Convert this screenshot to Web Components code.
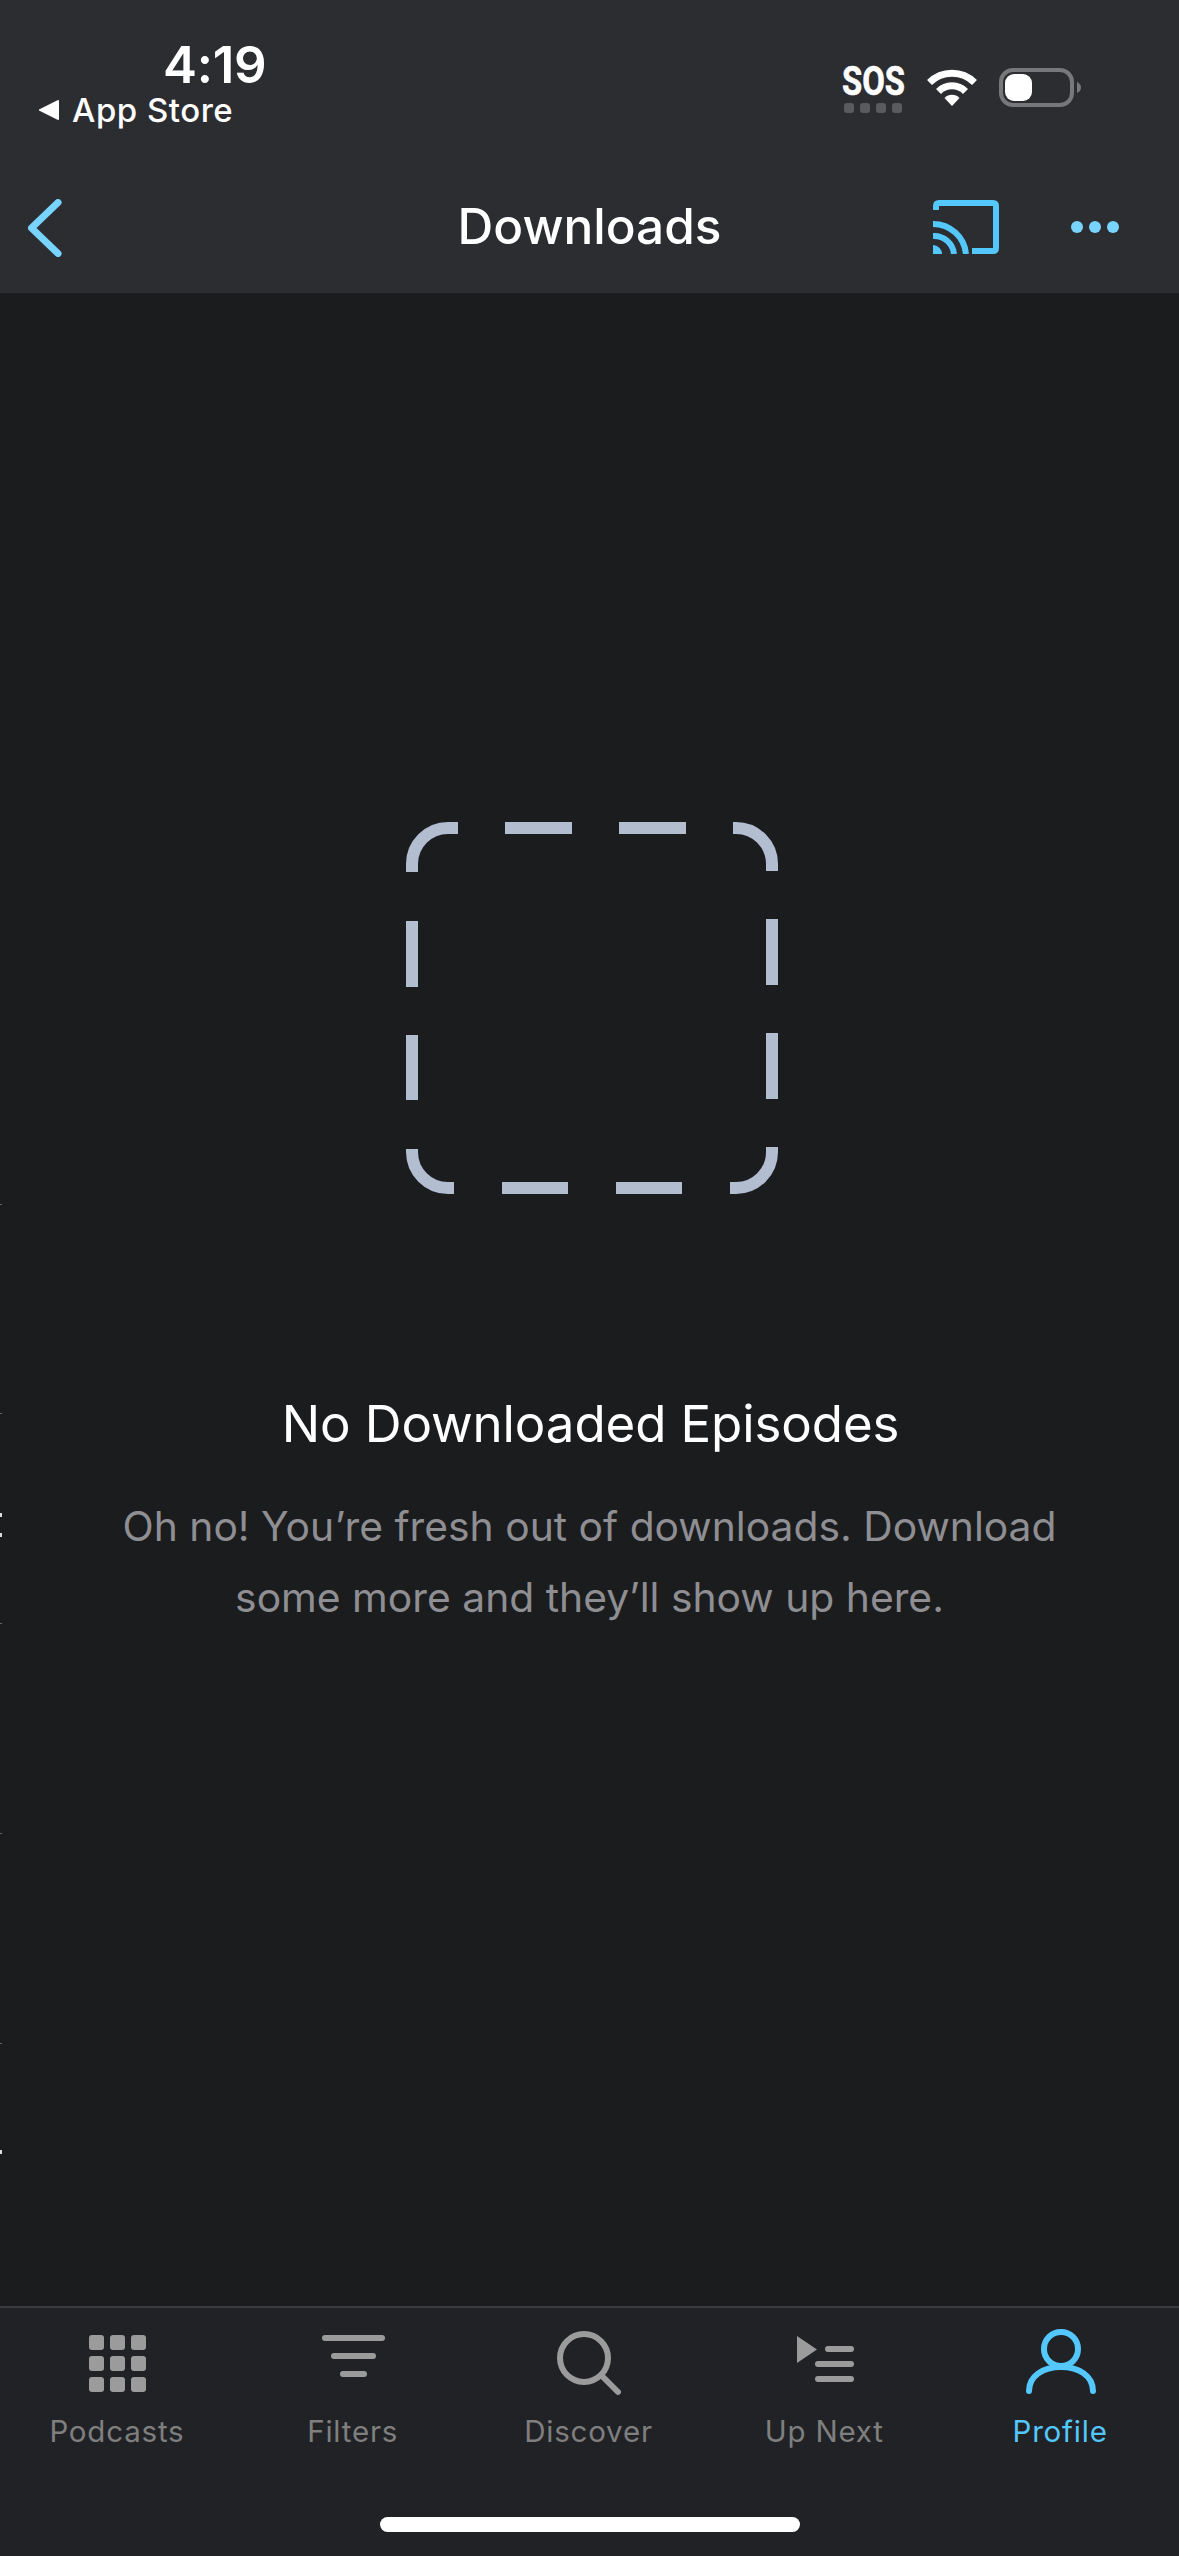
<!DOCTYPE html>
<html>
<head>
<meta charset="utf-8">
<title>Downloads</title>
<style>
  html, body { margin: 0; padding: 0; background: #1b1c1e; }
  body { width: 1179px; height: 2556px; font-family: Inter, "Liberation Sans", sans-serif; color: #fff; overflow: hidden; position: relative; }
  app-shell { height: 2556px; }
</style>
</head>
<body>
<app-shell>
  <top-bar slot="top" title-text="Downloads"></top-bar>
  <empty-state slot="main" heading="No Downloaded Episodes">Oh no! You’re fresh out of downloads. Download<br>some more and they’ll show up here.</empty-state>
  <tab-bar slot="bottom"></tab-bar>
</app-shell>
<edge-marks></edge-marks>

<script>
class AppShell extends HTMLElement {
  constructor() {
    super();
    this.attachShadow({ mode: 'open' });
    this.shadowRoot.innerHTML = `
      <style>
        :host { display: flex; flex-direction: column; }
        .main { flex: 1; display: flex; flex-direction: column; min-height: 0; }
      </style>
      <slot name="top"></slot>
      <div class="main"><slot name="main"></slot></div>
      <slot name="bottom"></slot>
    `;
  }
}

class TopBar extends HTMLElement {
  constructor() {
    super();
    this.attachShadow({ mode: 'open' });
  }
  connectedCallback() {
    this.shadowRoot.innerHTML = `
      <style>
        :host { display: block; height: 293px; background: #2c2d31; color: #fff; }
        .status { height: 193px; display: flex; justify-content: space-between; padding: 0 98px 0 39px; box-sizing: border-box; }
        .left { padding-top: 38px; }
        .time { font-size: 51px; line-height: 54px; font-weight: 600; margin-left: 124px; letter-spacing: -0.3px; }
        .back { display: flex; align-items: center; gap: 13px; font-size: 33px; line-height: 40px; font-weight: 500; margin-top: -2px; letter-spacing: 0.5px; }
        .back svg { display: block; }
        .right { display: flex; align-items: flex-start; padding-top: 67px; }
        .sos { width: 61px; margin-left: 0; margin-right: 22px; transform: translateX(-2px); }
        .sos b { display: block; font: 700 41px/29px Roboto, sans-serif; width: 61px; transform: scaleX(.8); transform-origin: left top; white-space: nowrap; -webkit-text-stroke: .6px #fff; }
        .dots { display: flex; gap: 6px; margin: 7px 0 0 2px; }
        .dots i { width: 10px; height: 10px; border-radius: 3px; background: #5a5b5f; }
        .wifi { display: block; margin: 2px 22px 0 0; }
        .batt { display: block; margin-top: 1px; }
        .nav { height: 100px; display: grid; grid-template-columns: minmax(0, 1fr) auto minmax(0, 1fr); align-items: start; padding: 0 60px 0 28px; }
        .nav svg { display: block; }
        .chev { margin-top: 6px; }
        h1 { margin: 0 0 0 32px; font-size: 49.5px; line-height: 66px; font-weight: 500; padding-top: 0; }
        .actions { display: flex; justify-content: flex-end; align-items: center; gap: 72px; margin-top: 7px; }
      </style>
      <div class="status">
        <div class="left">
          <div class="time">4:19</div>
          <div class="back">
            <svg width="20" height="20" viewBox="0 0 20 20"><path d="M20 1 V19 Q20 20 19 20 L0 10.5 V9.5 L19 0 Q20 0 20 1Z" fill="#fff"/></svg>
            <span>App Store</span>
          </div>
        </div>
        <div class="right">
          <div class="sos"><b>SOS</b><div class="dots"><i></i><i></i><i></i><i></i></div></div>
          <svg class="wifi" width="50" height="38" viewBox="0 0 50 38" fill="none" stroke="#fff" stroke-width="7">
            <path d="M2.5 13.5 A32 32 0 0 1 47.5 13.5"/>
            <path d="M11.5 22.5 A19 19 0 0 1 38.5 22.5"/>
            <path d="M17.5 29 L25 37 L32.5 29 A10.5 10.5 0 0 0 17.5 29Z" fill="#fff" stroke="none"/>
          </svg>
          <svg class="batt" width="82" height="39" viewBox="0 0 82 39">
            <rect x="2" y="2" width="71" height="35" rx="12" fill="none" stroke="#77787a" stroke-width="4"/>
            <rect x="6" y="6" width="27" height="27" rx="9" fill="#fff"/>
            <path d="M78 14 Q82 16 82 19.5 Q82 23 78 25Z" fill="#77787a"/>
          </svg>
        </div>
      </div>
      <div class="nav">
        <svg class="chev" width="36" height="58" viewBox="0 0 36 58" fill="none" stroke="#78d4fe" stroke-width="7" stroke-linecap="round" stroke-linejoin="round"><path d="M30 3.5 L3.5 29 L30 54.5"/></svg>
        <h1>${this.getAttribute('title-text')}</h1>
        <div class="actions">
          <svg width="66" height="54" viewBox="0 0 66 54" fill="none">
            <path d="M3 10 V6 Q3 3 6 3 H60 Q63 3 63 6 V48 Q63 51 60 51 H39" stroke="#54c7fc" stroke-width="6"/>
            <path d="M0 24 A33 33 0 0 1 33 54 M0 36 A20 20 0 0 1 21 54" stroke="#54c7fc" stroke-width="6"/>
            <path d="M0 45 A9 9 0 0 1 9 54 H0Z" fill="#54c7fc"/>
          </svg>
          <svg width="48" height="12" viewBox="0 0 48 12" fill="#78d4fe"><circle cx="6" cy="6" r="6"/><circle cx="24" cy="6" r="6"/><circle cx="42" cy="6" r="6"/></svg>
        </div>
      </div>
    `;
  }
}

class EmptyState extends HTMLElement {
  constructor() {
    super();
    this.attachShadow({ mode: 'open' });
  }
  connectedCallback() {
    this.shadowRoot.innerHTML = `
      <style>
        :host { display: flex; flex-direction: column; align-items: center; flex: 1; padding-top: 529px; text-align: center; background: #1b1c1e; }
        svg { display: block; margin-left: 5px; }
        h2 { margin: 199px 0 0 2px; font-size: 51px; line-height: 62px; font-weight: 400; color: #fff; letter-spacing: -0.1px; }
        p { margin: 36px 0 0; font-size: 40.8px; line-height: 71px; font-weight: 400; color: #8e8e93; }
      </style>
      <svg width="372" height="372" viewBox="0 0 372 372" fill="none" stroke="#b2bdd0" stroke-width="12">
        <path d="M52 6 H42 A36 36 0 0 0 6 42 V50"/>
        <path d="M99 6 H166 M213 6 H280"/>
        <path d="M327 6 H330 A36 36 0 0 1 366 42 V49"/>
        <path d="M6 99 V165 M6 213 V278"/>
        <path d="M366 97 V163 M366 211 V277"/>
        <path d="M6 327 V330 A36 36 0 0 0 42 366 H48"/>
        <path d="M96 366 H162 M210 366 H276"/>
        <path d="M366 325 V330 A36 36 0 0 1 330 366 H324"/>
      </svg>
      <h2>${this.getAttribute('heading')}</h2>
      <p><slot></slot></p>
    `;
  }
}

class TabItem extends HTMLElement {
  constructor() {
    super();
    this.attachShadow({ mode: 'open' });
    this.shadowRoot.innerHTML = `
      <style>
        :host { display: flex; flex: 1; flex-direction: column; align-items: center; color: #7f7f7f; }
        :host([active]) { color: #54c7fc; }
        .icon { height: 68px; }
        .label { font-size: 29.5px; line-height: 36px; margin: 16px 2px 0 0; letter-spacing: 0.8px; }
        ::slotted(svg) { display: block; }
      </style>
      <div class="icon"><slot name="icon"></slot></div>
      <div class="label"><slot></slot></div>
    `;
  }
}

class TabBar extends HTMLElement {
  constructor() {
    super();
    this.attachShadow({ mode: 'open' });
    this.shadowRoot.innerHTML = `
      <style>
        :host { display: block; height: 250px; box-sizing: border-box; background: #212226; border-top: 2px solid #3a3b3e; position: relative; }
        .tabs { display: flex; padding-top: 21px; }
        svg { display: block; }
        .home { position: absolute; left: 380px; top: 209px; width: 420px; height: 15px; border-radius: 8px; background: #fff; }
      </style>
      <div class="tabs">
        <tab-item>
          <svg slot="icon" width="57" height="68" viewBox="0 0 57 68" fill="#9b9b9b">
            <rect x="0" y="6" width="15" height="15" rx="3"/><rect x="21" y="6" width="15" height="15" rx="3"/><rect x="42" y="6" width="15" height="15" rx="3"/>
            <rect x="0" y="27" width="15" height="15" rx="3"/><rect x="21" y="27" width="15" height="15" rx="3"/><rect x="42" y="27" width="15" height="15" rx="3"/>
            <rect x="0" y="48" width="15" height="15" rx="3"/><rect x="21" y="48" width="15" height="15" rx="3"/><rect x="42" y="48" width="15" height="15" rx="3"/>
          </svg>
          Podcasts
        </tab-item>
        <tab-item>
          <svg slot="icon" width="63" height="68" viewBox="0 0 63 68" fill="#9b9b9b">
            <rect x="0" y="6" width="63" height="6" rx="3"/><rect x="9" y="24" width="45" height="6" rx="3"/><rect x="18" y="42" width="27" height="6" rx="3"/>
          </svg>
          Filters
        </tab-item>
        <tab-item>
          <svg slot="icon" width="64" height="68" viewBox="0 0 64 68" fill="none" stroke="#9b9b9b" stroke-width="6" stroke-linecap="round">
            <circle cx="27" cy="29" r="24"/><path d="M45 47 L61 63"/>
          </svg>
          Discover
        </tab-item>
        <tab-item>
          <svg slot="icon" width="57" height="68" viewBox="0 0 57 68" fill="#9b9b9b">
            <path d="M0 7 L20 20.5 L0 34Z"/><rect x="28" y="17" width="29" height="6" rx="3"/><rect x="18" y="32" width="39" height="6" rx="3"/><rect x="18" y="47" width="39" height="6" rx="3"/>
          </svg>
          Up Next
        </tab-item>
        <tab-item active>
          <svg slot="icon" width="70" height="68" viewBox="0 0 70 68" fill="none" stroke="#54c7fc" stroke-width="6" stroke-linecap="round">
            <circle cx="35" cy="20" r="17"/><path d="M3 62 C3 47 17 38 35 38 S67 47 67 62"/>
          </svg>
          Profile
        </tab-item>
      </div>
      <div class="home"></div>
    `;
  }
}

// little marks on the left edge of the screenshot
class EdgeMarks extends HTMLElement {
  constructor() {
    super();
    this.attachShadow({ mode: 'open' });
    let lines = [1204, 1413, 1623, 1833, 2043].map(y => `<i style="top:${y}px"></i>`).join('');
    let ticks = [1513, 1533, 2150].map(y => `<b style="top:${y}px"></b>`).join('');
    this.shadowRoot.innerHTML = `
      <style>
        :host { display: block; }
        i, b { position: absolute; left: 0; width: 2px; }
        i { height: 1px; background: #66676a; }
        b { height: 4px; background: #dcdcdc; }
      </style>
      ${lines}${ticks}
    `;
  }
}

customElements.define('app-shell', AppShell);
customElements.define('top-bar', TopBar);
customElements.define('empty-state', EmptyState);
customElements.define('tab-item', TabItem);
customElements.define('tab-bar', TabBar);
customElements.define('edge-marks', EdgeMarks);
</script>
</body>
</html>
